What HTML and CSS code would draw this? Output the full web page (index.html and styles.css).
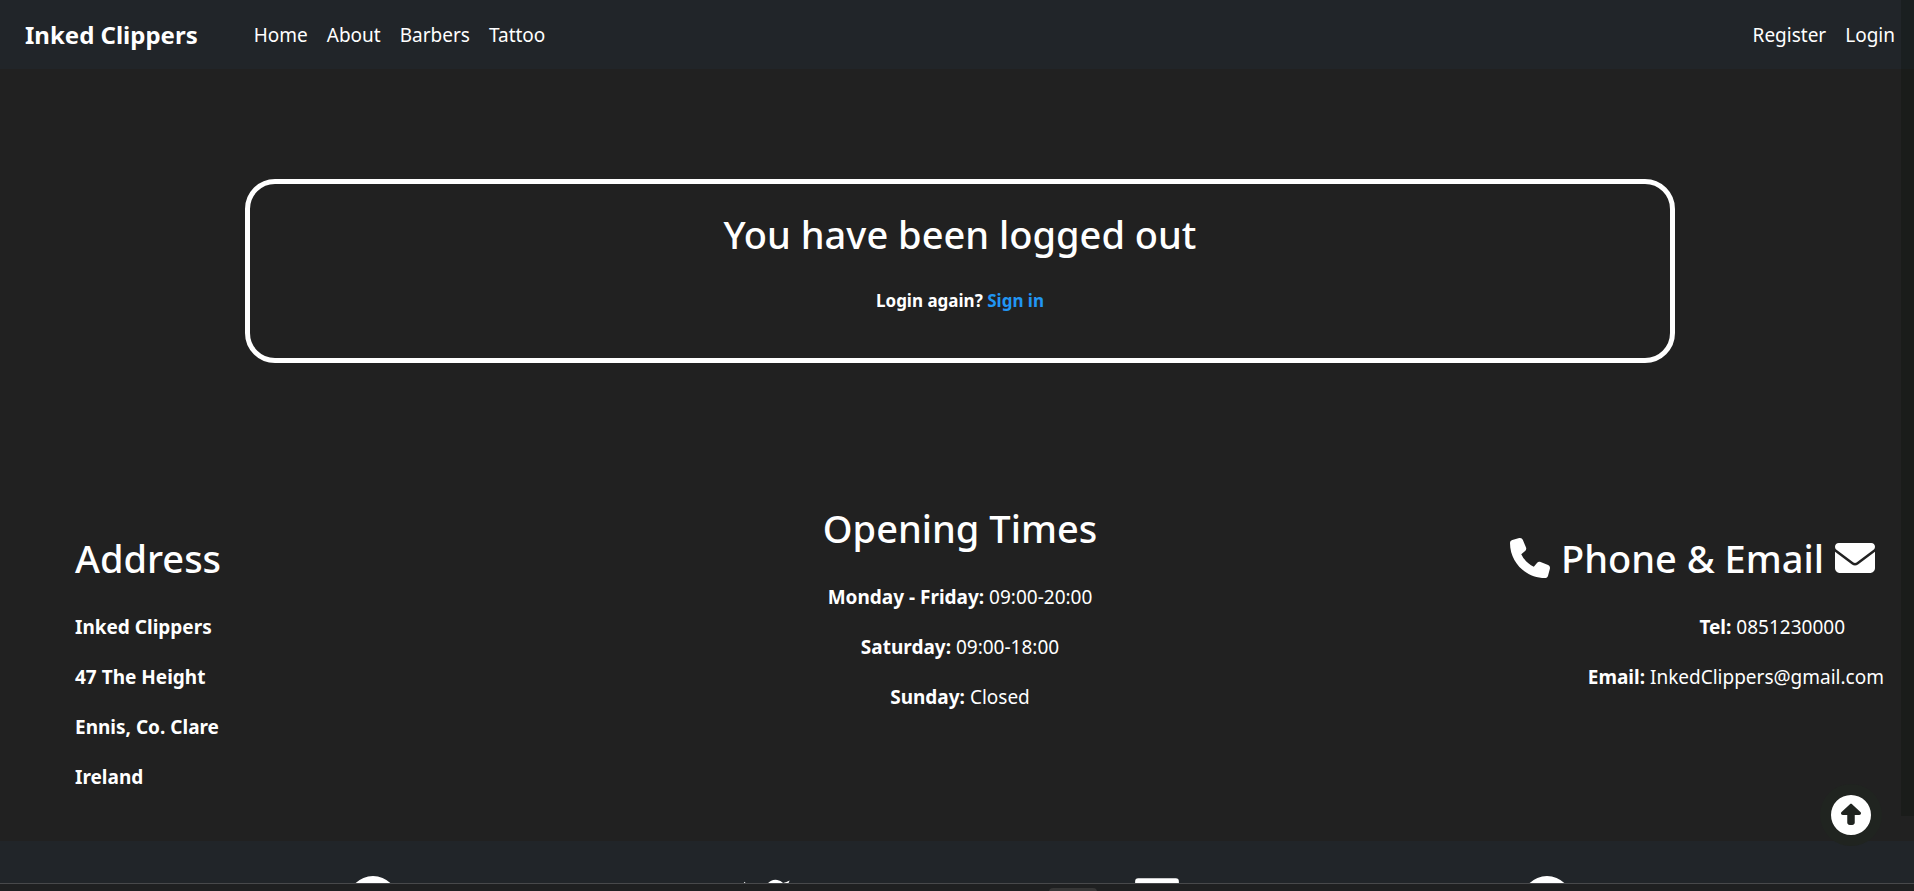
FILE: index.html
```html
<!DOCTYPE html>
<html lang="en">
<head>
<meta charset="utf-8">
<title>Inked Clippers</title>
<link rel="stylesheet" href="styles.css">
</head>
<body>
<div class="screen">
  <div class="page">
    <nav class="navbar">
      <a class="brand" href="#">Inked Clippers</a>
      <div class="nav-links">
        <a href="#">Home</a>
        <a href="#">About</a>
        <a href="#">Barbers</a>
        <a href="#">Tattoo</a>
      </div>
      <div class="nav-links nav-account">
        <a href="#">Register</a>
        <a href="#">Login</a>
      </div>
    </nav>
    <main class="main">
      <section class="notice">
        <h1 class="title">You have been logged out</h1>
        <p class="again">Login again? <a href="#">Sign in</a></p>
      </section>
    </main>
    <section class="info">
      <div class="col address">
        <h2 class="title">Address</h2>
        <p><b>Inked Clippers</b></p>
        <p><b>47 The Height</b></p>
        <p><b>Ennis, Co. Clare</b></p>
        <p><b>Ireland</b></p>
      </div>
      <div class="col times">
        <h2 class="title">Opening Times</h2>
        <p><b>Monday - Friday:</b> 09:00-20:00</p>
        <p><b>Saturday:</b> 09:00-18:00</p>
        <p><b>Sunday:</b> Closed</p>
      </div>
      <div class="col contact">
        <h2 class="title contact-title">
          <svg class="icon" viewBox="0 0 512 512" aria-hidden="true"><path d="M164.9 24.6c-7.7-18.6-28-28.5-47.4-23.2l-88 24C12.1 30.2 0 46 0 64C0 311.4 200.6 512 448 512c18 0 33.8-12.1 38.6-29.5l24-88c5.3-19.4-4.6-39.7-23.2-47.4l-96-40c-16.3-6.8-35.2-2.1-46.3 11.6L304.7 368C234.3 334.7 177.3 277.7 144 207.3L193.3 167c13.7-11.2 18.4-30 11.6-46.3l-40-96z"/></svg>
          <span>Phone &amp; Email</span>
          <svg class="icon" viewBox="0 0 512 512" aria-hidden="true"><path d="M48 64C21.5 64 0 85.5 0 112c0 15.1 7.1 29.3 19.2 38.4L236.8 313.6c11.4 8.5 27 8.5 38.4 0L492.8 150.4c12.1-9.1 19.2-23.3 19.2-38.4c0-26.5-21.5-48-48-48H48zM0 176V384c0 35.3 28.7 64 64 64H448c35.3 0 64-28.7 64-64V176L294.4 339.2c-22.8 17.1-54 17.1-76.8 0L0 176z"/></svg>
        </h2>
        <p class="tel"><b>Tel:</b> 0851230000</p>
        <p><b>Email:</b> InkedClippers@gmail.com</p>
      </div>
    </section>
    <footer class="footer">
      <a href="#" aria-label="Facebook"><svg class="social" viewBox="0 0 512 512"><path fill-rule="evenodd" d="M256 0a256 256 0 1 0 0 512A256 256 0 1 0 256 0zM214 506V330h-60v-74h60v-56c0-62 36-98 94-98 28 0 54 5 54 5v62h-32c-31 0-40 19-40 38v49h70l-11 74h-59v176z"/></svg></a>
      <a href="#" aria-label="Twitter"><svg class="social" viewBox="0 0.8 16 16"><path d="M5.026 15c6.038 0 9.341-5.003 9.341-9.334 0-.14 0-.282-.006-.422A6.685 6.685 0 0 0 16 3.542a6.658 6.658 0 0 1-1.889.518 3.301 3.301 0 0 0 1.447-1.817 6.533 6.533 0 0 1-2.087.793A3.286 3.286 0 0 0 7.875 6.03a9.325 9.325 0 0 1-6.767-3.429 3.289 3.289 0 0 0 1.018 4.382A3.323 3.323 0 0 1 .64 6.575v.045a3.288 3.288 0 0 0 2.632 3.218 3.203 3.203 0 0 1-.865.115 3.23 3.23 0 0 1-.614-.057 3.283 3.283 0 0 0 3.067 2.277A6.588 6.588 0 0 1 .78 13.58a6.32 6.32 0 0 1-.78-.045A9.344 9.344 0 0 0 5.026 15z"/></svg></a>
      <a href="#" aria-label="LinkedIn"><svg class="social social-narrow" viewBox="0 8 448 512"><path fill-rule="evenodd" d="M32 32H416a32 32 0 0 1 32 32V448a32 32 0 0 1-32 32H32a32 32 0 0 1-32-32V64a32 32 0 0 1 32-32zM69 202V416h66V202zM102 96a38 38 0 1 0 0 77 38 38 0 1 0 0-77zM177 202V416h66V310c0-62 74-60 74 0V416h67V283c0-100-107-99-141-48V202z"/></svg></a>
      <a href="#" aria-label="Pinterest"><svg class="social" viewBox="0 0 512 512"><path d="M256 0a256 256 0 1 0 0 512A256 256 0 1 0 256 0z"/></svg></a>
    </footer>
  </div>
  <a class="to-top" href="#" aria-label="Back to top"><svg class="icon" viewBox="0 0 512 512"><path fill-rule="evenodd" d="M256 0a256 256 0 1 0 0 512A256 256 0 1 0 256 0zM135.1 217.4l107.1-99.9c3.8-3.5 8.7-5.5 13.8-5.5s10.1 2 13.8 5.5l107.1 99.9c4.5 4.2 7.1 10.1 7.1 16.3c0 12.3-10 22.3-22.3 22.3H304v96c0 17.7-14.3 32-32 32H240c-17.7 0-32-14.3-32-32V256H150.3C138 256 128 246 128 233.7c0-6.2 2.6-12.1 7.1-16.3z"/></svg></a>
  <div class="scroll-thumb"></div>
</div>
<div class="taskbar"><div class="task-tab"></div></div>
</body>
</html>
```
FILE: styles.css
```css
* { box-sizing: border-box; }

body {
  margin: 0;
  height: 100vh;
  display: flex;
  flex-direction: column;
  overflow: hidden;
  background: #212121;
  color: #fff;
  font-family: "Noto Sans", "Open Sans", sans-serif;
  font-size: 19px;
  line-height: 30px;
}

a { color: inherit; text-decoration: none; }
h1, h2, p { margin: 0; }

.screen {
  position: relative;
  flex: 1;
  min-height: 0;
  overflow: hidden;
}

/* The page runs slightly past the right edge of the window. */
.page { margin-right: -6px; }

.navbar {
  display: flex;
  align-items: center;
  height: 69px;
  padding: 0 25px;
  background: #212529;
}

.brand {
  margin-right: 56px;
  font-size: 24px;
  font-weight: 700;
}

.nav-links { display: flex; gap: 19px; }
.nav-account { margin-left: auto; }

.main { padding: 110px 245px 0; }

.notice {
  padding: 26px 20px 44px;
  border: 5px solid #fff;
  border-radius: 30px;
  text-align: center;
}

.title {
  font-size: 38px;
  font-weight: 500;
  line-height: 48px;
}

.again {
  margin-top: 29px;
  font-size: 17px;
  font-weight: 700;
  line-height: 27px;
}

.again a { color: #2196f3; }

.info {
  display: grid;
  grid-template-columns: 1fr 1fr 1fr;
  padding: 141px 36px 49px;
}

.col {
  display: flex;
  flex-direction: column;
  gap: 20px;
}

.col .title { margin-bottom: 10px; }

.address { padding: 30px 0 0 39px; }
.times { text-align: center; }
.contact { padding-top: 30px; text-align: right; }

.contact-title {
  display: flex;
  justify-content: flex-end;
  align-items: center;
  gap: 11px;
  padding-right: 9px;
}

.tel { padding-right: 39px; }

.icon {
  display: block;
  width: 40px;
  height: 40px;
  fill: currentColor;
}

.footer {
  display: flex;
  justify-content: space-evenly;
  padding: 35px 4px;
  background: #212529;
}

.social {
  display: block;
  width: 50px;
  height: 50px;
  fill: #fff;
}

.social-narrow { width: 44px; }

.to-top {
  position: absolute;
  right: 32px;
  bottom: 37px;
  padding: 11px;
  border-radius: 50%;
  background: #202420;
}

.scroll-thumb {
  position: absolute;
  top: 0;
  right: 0;
  width: 13px;
  height: 816px;
  background: rgba(0, 8, 0, 0.2);
}

.taskbar {
  height: 8px;
  border-top: 1px solid #48494b;
  background: #1f2021;
  overflow: hidden;
}

.task-tab {
  width: 48px;
  height: 10px;
  margin: 4px auto 0;
  border-radius: 4px;
  background: #363636;
  translate: 116px 0;
}
```
